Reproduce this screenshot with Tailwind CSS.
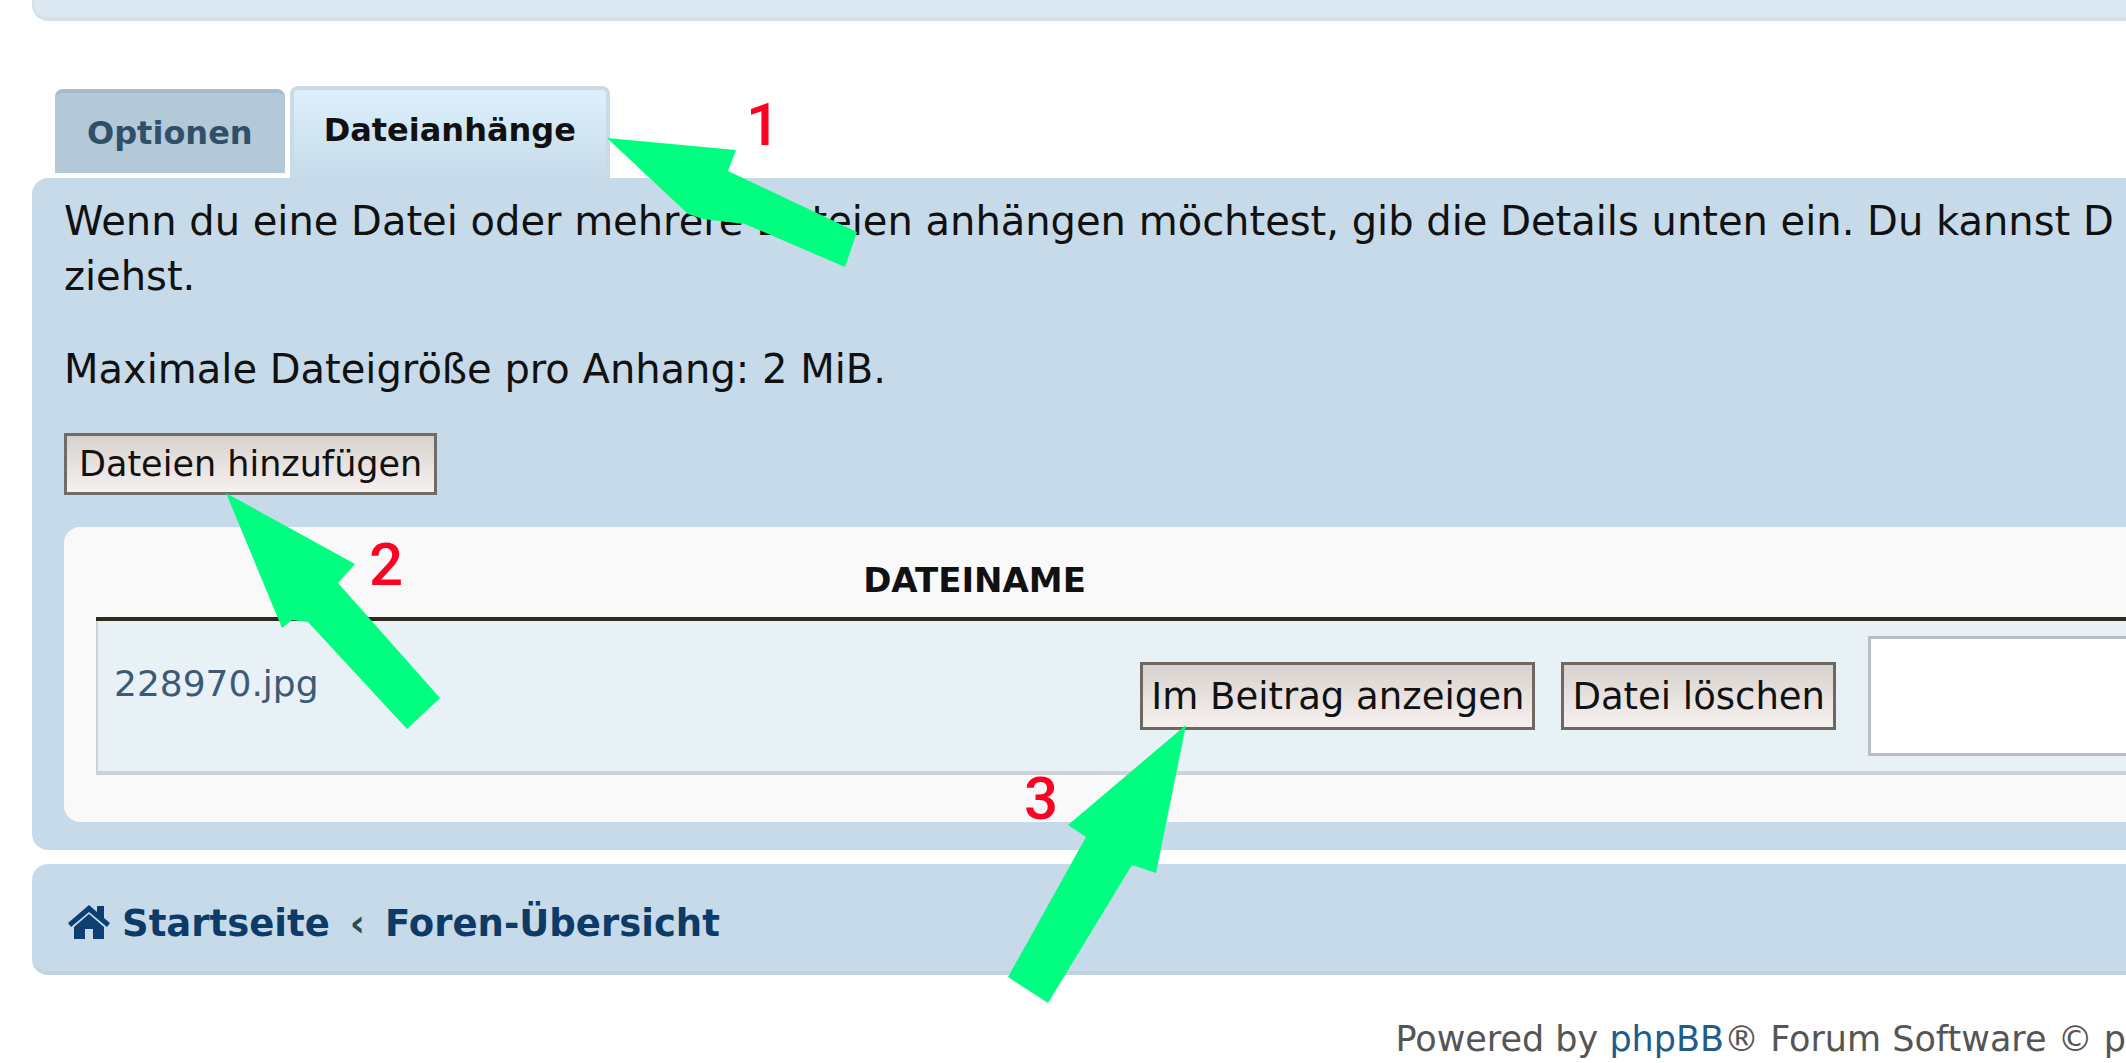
<!DOCTYPE html>
<html lang="de">
<head>
    <meta charset="UTF-8">
    <meta name="viewport" content="width=device-width, initial-scale=1.0">
    <title>Dateianhänge</title>
    <script src="https://cdn.jsdelivr.net/npm/@tailwindcss/browser@4"></script>
</head>
<body class="relative bg-white font-['DejaVu_Sans',Verdana,sans-serif] text-[#111] overflow-x-hidden">

    <div class="pl-8">
        <!-- Editor panel above -->
        <div class="h-[21px] bg-[#dbe8f2] border-b-4 border-l-2 border-[#d5e1e9] rounded-bl-2xl"></div>

        <!-- Tabs -->
        <nav class="flex items-end gap-[5px] pl-[23px] mt-[65px]">
            <a href="#optionen" class="h-[84px] mb-[5px] px-8 flex items-center rounded-t-lg bg-[#b3c9d7] border-t-4 border-[#a5bccb] text-[32px] font-bold text-[#2f5068]">Optionen</a>
            <a href="#anhang" class="h-[92px] px-[30px] pb-2 flex items-center rounded-t-lg bg-linear-to-b from-[#def0fc] to-[#c6daea] border-t-4 border-x-4 border-[#cbdbe4] text-[32px] font-bold">Dateianhänge</a>
        </nav>

        <!-- Attachments panel -->
        <section class="bg-[#c6daea] rounded-l-2xl pl-8 pt-4 pb-7">
            <p class="text-[40px] leading-[55px] whitespace-nowrap">Wenn du eine Datei oder mehrere Dateien anhängen möchtest, gib die Details unten ein. Du kannst D<br>ziehst.</p>
            <p class="text-[40px] leading-[55px] mt-[38px]">Maximale Dateigröße pro Anhang: 2 MiB.</p>
            <button type="button" class="block mt-9 h-[62px] px-3 border-[3px] border-[#6f6c6a] bg-linear-to-b from-[#d8d2ce] to-[#f6f1ef] text-[35px] leading-none">Dateien hinzufügen</button>

            <div class="mt-8 bg-[#f9f9f9] rounded-l-2xl pl-8 pt-5 pb-[47px]">
                <table class="w-full table-fixed border-collapse">
                    <thead>
                        <tr class="border-b-4 border-[#33291f]">
                            <th class="w-[86.5%] h-[72px] pb-1 text-[34px] leading-none font-bold text-center">DATEINAME</th>
                            <th></th>
                        </tr>
                    </thead>
                    <tbody>
                        <tr class="h-[154px] bg-[#e8f1f5] border-b-4 border-l-2 border-[#cdd2d5]">
                            <td class="px-4">
                                <div class="flex items-center gap-[26px]">
                                    <a href="#datei" class="flex-1 pb-6 text-[36px] text-[#3c5a78]">228970.jpg</a>
                                    <button type="button" class="h-[68px] px-2 border-[3px] border-[#6f6862] bg-linear-to-b from-[#d8d2ce] to-[#f6f1ef] text-[37px] leading-none">Im Beitrag anzeigen</button>
                                    <button type="button" class="h-[68px] px-2 border-[3px] border-[#6f6862] bg-linear-to-b from-[#d8d2ce] to-[#f6f1ef] text-[37px] leading-none">Datei löschen</button>
                                </div>
                            </td>
                            <td class="pl-4"><textarea aria-label="Dateikommentar" class="block w-full h-[120px] bg-white border-[3px] border-r-0 border-[#bcbfc1] resize-none"></textarea></td>
                        </tr>
                    </tbody>
                </table>
            </div>
        </section>

        <!-- Breadcrumbs -->
        <nav class="h-[111px] mt-[14px] pl-9 pt-3 flex items-center bg-[#c6daea] rounded-l-2xl border-b-4 border-[#c3d2dd] text-[37px] font-bold text-[#0d3a66]">
            <svg class="w-[42px] h-[34px] mr-3 mb-1" viewBox="0 0 42 34" fill="#0d3f73"><path d="M21 0 0 18l3 4L21 7l18 15 3-4-6-5V1h-7v6z"/><path d="M21 9 6 22v12h11V24h8v10h11V22z"/></svg>
            <a href="#start">Startseite</a>
            <span class="mx-5 text-[#2d4a55]">‹</span>
            <a href="#foren">Foren-Übersicht</a>
        </nav>
    </div>

    <footer class="flex justify-end mt-[38px] text-[35px] text-[#555] whitespace-nowrap">
        <p>Powered by <a href="#phpbb" class="text-[#1f5c8c]">phpBB</a>® Forum Software © p</p>
    </footer>

    <!-- Numbered arrows -->
    <svg class="absolute left-0 top-0 pointer-events-none" width="2126" height="1063" viewBox="0 0 2126 1063" fill="#00ff80">
        <polygon points="607,138 736,150 728,171 857,232 845,267 745,224 703,219 688,214"/>
        <polygon points="226,493 355,564 338,583 440,698 407,729 308,622 292,620 282,628"/>
        <polygon points="1186,725 1156,873 1132,865 1048,1003 1008,977 1086,837 1068,825"/>
        <g class="font-[Roboto,Arial,sans-serif] font-medium" fill="#ff0022" font-size="60">
            <text x="746" y="145">1</text>
            <text x="369" y="585">2</text>
            <text x="1024" y="819">3</text>
        </g>
    </svg>

</body>
</html>
